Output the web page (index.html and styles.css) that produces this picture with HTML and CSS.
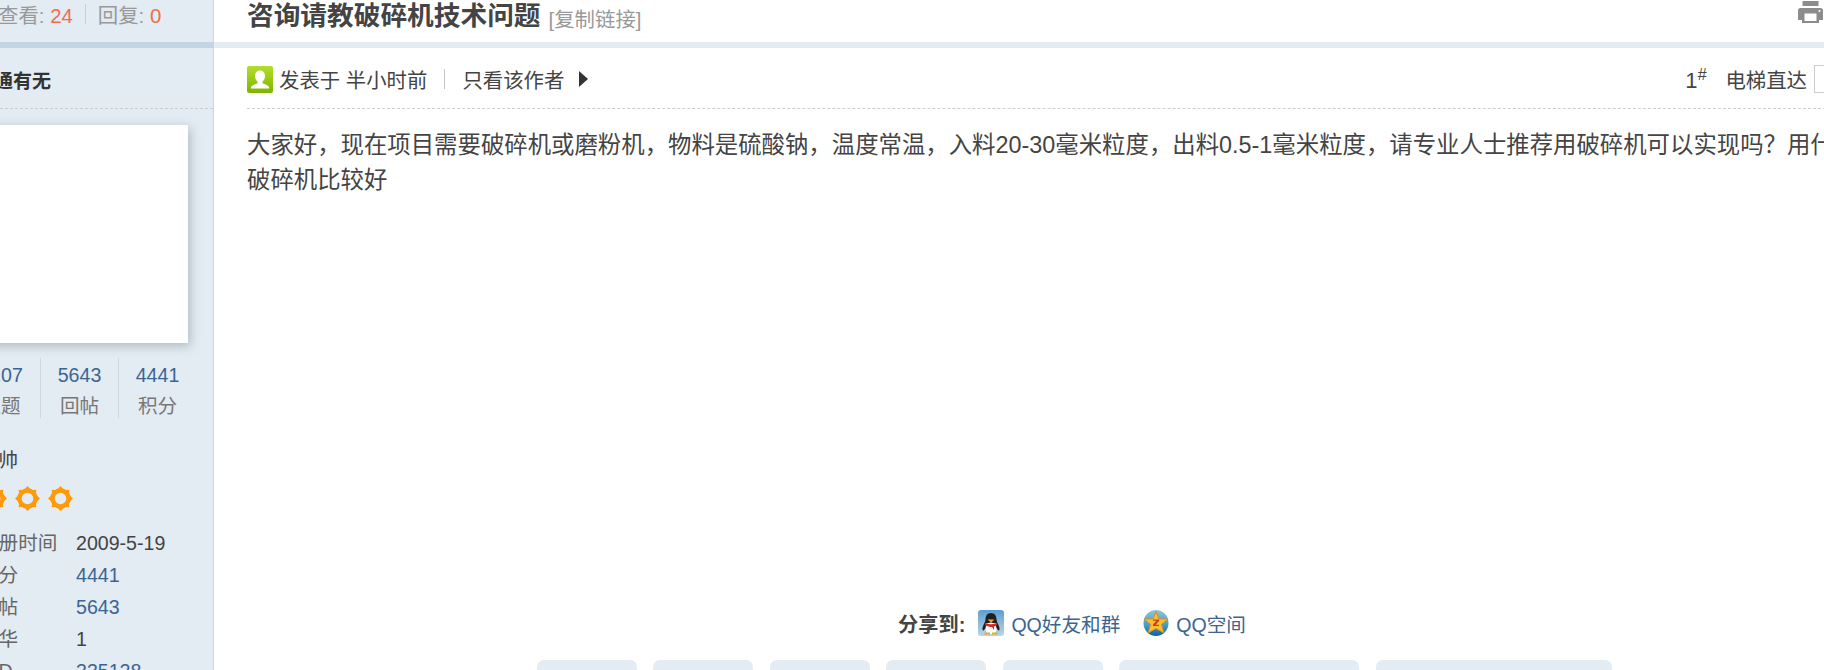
FILE: index.html
```html
<!DOCTYPE html>
<html lang="zh">
<head>
    <meta charset="UTF-8">
    <meta name="viewport" content="width=device-width, initial-scale=1.0">
    <title>咨询请教破碎机技术问题</title>
    <link rel="stylesheet" href="styles.css">
</head>
<body>
    <svg class="defs" width="0" height="0">
        <symbol id="sun" viewBox="0 0 25 25">
            <circle cx="12.5" cy="12.5" r="8" fill="none" stroke="#ff9a0a" stroke-width="4.4"/>
            <path fill="#ff9a0a" d="M12.5 0l4.200 4.500h-8.400zM12.500 25l4.200-4.500h-8.400zM0 12.500l4.500-4.200v8.400zM25 12.500l-4.500-4.200v8.400zM3.700 3.700l6 .6-5.400 5.400zM21.300 3.700l-.6 6-5.400-5.400zM3.700 21.300l.6-6 5.400 5.400zM21.300 21.300l-6-.6 5.400-5.400z"/>
        </symbol>
    </svg>
    <div class="page">
        <aside class="side">
            <div class="counts">
                <span>查看: <em>24</em></span><i class="pipe"></i><span>回复: <em>0</em></span>
            </div>
            <div class="bar-dark"></div>
            <div class="author">互通有无</div>
            <div class="avatar"></div>
            <div class="stats">
                <div class="stat"><a>2107</a><span>主题</span></div>
                <div class="stat"><a>5643</a><span>回帖</span></div>
                <div class="stat"><a>4441</a><span>积分</span></div>
            </div>
            <div class="rank">元帅</div>
            <div class="suns">
                <svg><use href="#sun"/></svg>
                <svg><use href="#sun"/></svg>
                <svg><use href="#sun"/></svg>
            </div>
            <dl class="info">
                <dt>注册时间</dt><dd>2009-5-19</dd>
                <dt>积分</dt><dd><a>4441</a></dd>
                <dt>回帖</dt><dd><a>5643</a></dd>
                <dt>精华</dt><dd>1</dd>
                <dt>UID</dt><dd><a>335128</a></dd>
            </dl>
        </aside>
        <main class="main">
            <div class="head">
                <h1>咨询请教破碎机技术问题</h1>
                <a class="copy">[复制链接]</a>
                <svg class="printer" viewBox="0 0 25 22">
                    <path fill="#8c8c8c" d="M4.500 0h16v5h-16zM2.500 7h20A2.500 2.500 0 0 1 25 9.500V19h-4v3H4v-3H0V9.500A2.500 2.500 0 0 1 2.500 7z"/>
                    <path fill="#fff" d="M6.500 12.500h12V20h-12z"/>
                    <circle cx="21.500" cy="10" r="1" fill="#fff"/>
                </svg>
            </div>
            <div class="bar-light"></div>
            <div class="meta">
                <svg class="user" viewBox="0 0 26 27">
                    <defs>
                        <linearGradient id="green" x1="0" y1="0" x2="0" y2="1">
                            <stop offset="0" stop-color="#b4de2c"/>
                            <stop offset="1" stop-color="#7db500"/>
                        </linearGradient>
                    </defs>
                    <rect width="26" height="27" rx="2" fill="url(#green)"/>
                    <path fill="#fff" d="M13 4.500c3.200 0 5 2.400 5 5.500 0 2.400-1 4.400-2.500 5.500v1.800c2.300 1 5.500 1.700 6.500 3.700v1.500H4V21c1-2 4.200-2.700 6.500-3.700v-1.800C9 14.400 8 12.400 8 10c0-3.100 1.800-5.500 5-5.500z"/>
                </svg>
                <span class="posted">发表于 半小时前</span>
                <i class="pipe"></i>
                <a class="only">只看该作者</a>
                <i class="arrow"></i>
                <div class="floor">
                    <span class="num">1<sup>#</sup></span>
                    <span class="jump">电梯直达</span>
                    <input class="jump-box" type="text">
                </div>
            </div>
            <div class="content">大家好，现在项目需要破碎机或磨粉机，物料是硫酸钠，温度常温，入料20-30毫米粒度，出料0.5-1毫米粒度，请专业人士推荐用破碎机可以实现吗？用什么破碎机比较好</div>
            <div class="share">
                <b>分享到:</b>
                <svg class="share-icon" viewBox="0 0 26 26">
                    <defs>
                        <linearGradient id="qqbg" x1="0" y1="0" x2="0" y2="1">
                            <stop offset="0" stop-color="#5d9fd0"/>
                            <stop offset="1" stop-color="#b9d6e6"/>
                        </linearGradient>
                    </defs>
                    <rect width="26" height="26" rx="3" fill="url(#qqbg)"/>
                    <path fill="#1f1f24" d="M13 3c3.600 0 5.500 2.800 5.500 6.500 0 2 1.800 4.500 2.800 7.500.7 2.500 0 4-1 3.200L18 18v-5H8v5l-2.300 2.200c-1 .8-1.700-.7-1-3.200 1-3 2.800-5.500 2.800-7.500C7.500 5.800 9.400 3 13 3z"/>
                    <path fill="#fff" d="M13 12.500c3.300 0 5.500 3 5.500 6.500 0 3-2.200 5-5.500 5s-5.500-2-5.500-5c0-3.500 2.200-6.500 5.500-6.500z"/>
                    <path fill="#f5a81c" d="M9.500 9.500h7L13 12.500zM7 22.500h5v2H6zM14 22.500h5l1 2h-6z"/>
                    <path fill="#d8261c" d="M7 13c4 1.800 8 1.800 12 0v2c-1 .8-2 1.200-3 1.500V20l-2-3c-2 0-5-.5-7-2z"/>
                </svg>
                <a>QQ好友和群</a>
                <svg class="share-icon second" viewBox="0 0 26 26">
                    <defs>
                        <linearGradient id="qzone" x1="0" y1="0" x2="0" y2="1">
                            <stop offset="0" stop-color="#8fc6d8"/>
                            <stop offset=".6" stop-color="#3f9dc4"/>
                            <stop offset="1" stop-color="#0d5f9e"/>
                        </linearGradient>
                    </defs>
                    <ellipse cx="13" cy="13" rx="12.500" ry="13" fill="url(#qzone)"/>
                    <path fill="#f8c030" stroke="#e08a20" d="M13 1.500l3 7.500h9l-6.500 5.500L21 23l-8-4.500L5 23l2.500-8.500L1 9h9z"/>
                    <path fill="#d23a1a" d="M10 9.500h6v1.500l-3.400 3.700H16V16h-6v-1.500l3.400-3.700H10z"/>
                </svg>
                <a>QQ空间</a>
            </div>
            <div class="actions">
                <div class="btn"></div>
                <div class="btn"></div>
                <div class="btn"></div>
                <div class="btn"></div>
                <div class="btn"></div>
                <div class="btn wide"></div>
                <div class="btn wider"></div>
            </div>
        </main>
    </div>
</body>
</html>
```

FILE: styles.css
```css
* {
    margin: 0;
    padding: 0;
    box-sizing: border-box;
}

html,
body {
    height: 670px;
    overflow: hidden;
}

body {
    font-family: 'Liberation Sans', 'Noto Sans CJK SC', sans-serif;
    font-size: 19.6px;
    color: #444;
    background: #fff;
}

.defs {
    display: block;
}

a {
    color: #3b6591;
}

em {
    font-style: normal;
    color: #f26c4f;
}

/* page is scrolled sideways, the left of the sidebar is off screen */
.page {
    display: flex;
    width: 1989px;
    height: 670px;
    margin-left: -55px;
}

/* 左侧作者栏 */
.side {
    flex: none;
    width: 269px;
    background: #e3ebf3;
    border-right: 1px solid #c9d5e0;
}

.counts {
    display: flex;
    align-items: center;
    height: 42px;
    padding: 0 0 14px 53px;
    font-size: 20.4px;
    color: #999;
}

.counts .pipe {
    width: 1px;
    height: 20px;
    margin: 0 12px;
    background: #c8cfd6;
}

.bar-dark {
    height: 6px;
    background: #c2d5e3;
}

.author {
    height: 61px;
    padding-left: 30px;
    font-size: 19px;
    font-weight: bold;
    line-height: 68px;
    color: #333;
    border-bottom: 1px dashed #cdcdcd;
}

.avatar {
    width: 218px;
    height: 218px;
    margin: 16px 0 0 25px;
    background: #fff;
    box-shadow: 2px 3px 10px rgba(80, 90, 100, 0.35);
}

.stats {
    display: flex;
    margin: 15px 0 0 17px;
}

.stat {
    display: flex;
    flex-direction: column;
    align-items: center;
    gap: 7px;
    width: 78px;
    height: 60px;
    padding-top: 5px;
    border-left: 1px solid #cfd8e0;
    line-height: 24px;
}

.stat:first-child {
    border-left: none;
}

.stat span {
    color: #777;
}

.rank {
    margin: 28px 0 0 34px;
    line-height: 28px;
}

.suns {
    display: flex;
    gap: 8px;
    margin: 12px 0 0 37px;
}

.suns svg {
    width: 25px;
    height: 25px;
}

.info {
    display: grid;
    grid-template-columns: 97px 1fr;
    grid-auto-rows: 32px;
    margin: 16px 0 0 34px;
    line-height: 32px;
}

.info dt {
    color: #666;
}

/* 右侧主贴 */
.main {
    flex: none;
    width: 1720px;
}

.head {
    display: flex;
    align-items: center;
    height: 42px;
    padding: 0 0 10px 33px;
}

h1 {
    font-size: 26.7px;
    line-height: 32px;
    color: #444;
}

.copy {
    margin: 3px 0 0 8px;
    font-size: 20.4px;
    color: #999;
}

.printer {
    flex: none;
    width: 25px;
    height: 22px;
    margin: -8px 0 0 1157px;
}

.bar-light {
    height: 6px;
    background: #e3ebf3;
}

.meta {
    display: flex;
    align-items: center;
    height: 61px;
    margin: 0 33px;
    padding-top: 2px;
    font-size: 20.4px;
    border-bottom: 1px dashed #cdcdcd;
}

.user {
    width: 26px;
    height: 27px;
    margin-right: 6px;
}

.meta .pipe {
    width: 1px;
    height: 20px;
    margin: 0 17px;
    background: #c4c4c4;
}

.only {
    color: #444;
}

.arrow {
    width: 0;
    height: 0;
    margin-left: 15px;
    border-left: 9px solid #333;
    border-top: 8px solid transparent;
    border-bottom: 8px solid transparent;
}

.floor {
    display: flex;
    align-items: center;
    margin-left: auto;
}

.num {
    margin-top: 3px;
    font-size: 22px;
}

.num sup {
    font-size: 16px;
    font-style: italic;
    line-height: 0;
}

.jump {
    margin-left: 19px;
}

.jump-box {
    width: 87px;
    height: 28px;
    margin-left: 7px;
    border: 1px solid #ccc;
    background: #fff;
}

.content {
    width: 1653px;
    height: 501px;
    padding: 19px 0 0 33px;
    font-size: 23.4px;
    line-height: 34.5px;
}

.share {
    display: flex;
    align-items: center;
    justify-content: center;
    height: 26px;
    margin-right: 4px;
}

.share b {
    margin-right: 13px;
    font-size: 20.2px;
    font-weight: bold;
}

.share-icon {
    width: 26px;
    height: 26px;
    margin-right: 7px;
}

.share-icon.second {
    margin-left: 23px;
}

.actions {
    display: flex;
    justify-content: center;
    gap: 16.500px;
    margin-top: 24px;
}

.btn {
    width: 100px;
    height: 40px;
    border-radius: 7px;
    background: #e3ebf3;
}

.btn.wide {
    width: 240px;
}

.btn.wider {
    width: 236px;
}
```
